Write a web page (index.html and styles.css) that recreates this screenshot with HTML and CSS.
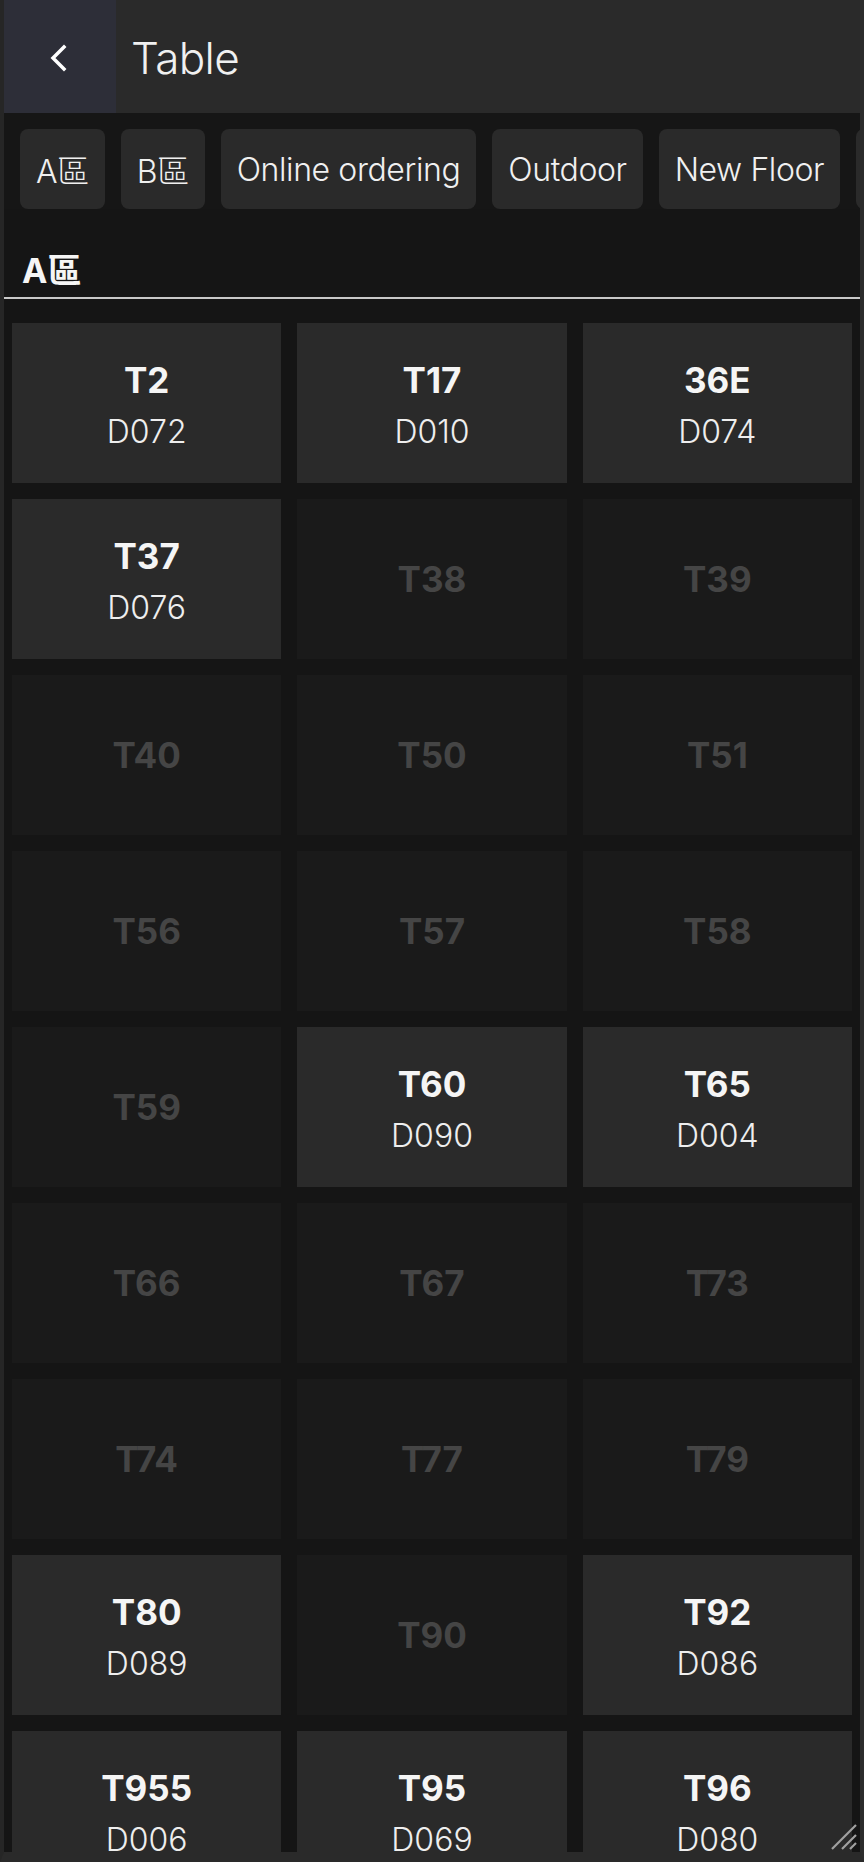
FILE: index.html
```html
<!DOCTYPE html>
<html>
<head>
<meta charset="utf-8">
<link rel="stylesheet" href="styles.css">
</head>
<body>
<div class="app">
  <header class="header">
    <div class="back">
      <svg width="24" height="30" viewBox="0 0 24 30"><path d="M17 4 L6 15 L17 26" fill="none" stroke="#ffffff" stroke-width="3.5" stroke-linecap="square"/></svg>
    </div>
    <div class="title">Table</div>
  </header>
  <nav class="tabs">
    <div class="tab">A區</div>
    <div class="tab">B區</div>
    <div class="tab">Online ordering</div>
    <div class="tab">Outdoor</div>
    <div class="tab">New Floor</div>
    <div class="tab">More</div>
  </nav>
  <div class="section">A區</div>
  <div class="grid-wrap">
    <div class="grid">
      <div class="card on"><div class="name">T2</div><div class="code">D072</div></div>
      <div class="card on"><div class="name">T17</div><div class="code">D010</div></div>
      <div class="card on"><div class="name">36E</div><div class="code">D074</div></div>
      <div class="card on"><div class="name">T37</div><div class="code">D076</div></div>
      <div class="card"><div class="name">T38</div></div>
      <div class="card"><div class="name">T39</div></div>
      <div class="card"><div class="name">T40</div></div>
      <div class="card"><div class="name">T50</div></div>
      <div class="card"><div class="name">T51</div></div>
      <div class="card"><div class="name">T56</div></div>
      <div class="card"><div class="name">T57</div></div>
      <div class="card"><div class="name">T58</div></div>
      <div class="card"><div class="name">T59</div></div>
      <div class="card on"><div class="name">T60</div><div class="code">D090</div></div>
      <div class="card on"><div class="name">T65</div><div class="code">D004</div></div>
      <div class="card"><div class="name">T66</div></div>
      <div class="card"><div class="name">T67</div></div>
      <div class="card"><div class="name">T73</div></div>
      <div class="card"><div class="name">T74</div></div>
      <div class="card"><div class="name">T77</div></div>
      <div class="card"><div class="name">T79</div></div>
      <div class="card on"><div class="name">T80</div><div class="code">D089</div></div>
      <div class="card"><div class="name">T90</div></div>
      <div class="card on"><div class="name">T92</div><div class="code">D086</div></div>
      <div class="card on"><div class="name">T955</div><div class="code">D006</div></div>
      <div class="card on"><div class="name">T95</div><div class="code">D069</div></div>
      <div class="card on"><div class="name">T96</div><div class="code">D080</div></div>
    </div>
    <svg class="grip" width="28" height="28" viewBox="0 0 28 28">
      <path d="M2 26 L26 2 M12 26 L26 12 M20 26 L26 20" stroke="#a0a0a0" stroke-width="2.2" fill="none"/>
    </svg>
  </div>
</div>
</body>
</html>
```

FILE: styles.css
```css
html, body {
  margin: 0;
  padding: 0;
  background: #2a2a2a;
}
body {
  font-family: Inter, "Noto Sans CJK TC", sans-serif;
  color: #f2f2f2;
}
.app {
  width: 864px;
  height: 1862px;
  box-sizing: border-box;
  border-left: 4px solid #262626;
  border-right: 4px solid #2c2c2c;
  border-bottom: 10px solid #2a2a2a;
  display: flex;
  flex-direction: column;
  overflow: hidden;
  background: #151515;
}
.header {
  height: 113px;
  flex: none;
  display: flex;
  background: #2a2a2a;
}
.back {
  width: 112px;
  background: #2d2e38;
  display: flex;
  align-items: center;
  justify-content: center;
}
.back svg {
  margin-left: -2px;
  margin-top: 2px;
}
.title {
  padding-left: 15px;
  display: flex;
  align-items: center;
  font-size: 44px;
  font-weight: 300;
  letter-spacing: -0.6px;
  color: #f0f0f0;
  padding-top: 2px;
}
.tabs {
  flex: none;
  display: flex;
  gap: 16px;
  padding: 16px 0 0 16px;
  overflow: hidden;
  white-space: nowrap;
  background: #161616;
}
.tab {
  flex: none;
  height: 80px;
  padding: 0 16px;
  border-radius: 8px;
  background: #2a2a2a;
  display: flex;
  align-items: center;
  font-size: 32px;
  font-weight: 300;
  letter-spacing: -0.4px;
  color: #f0f0f0;
}
.section {
  flex: none;
  padding: 40px 0 4px 18px;
  line-height: 44px;
  font-size: 34px;
  font-weight: 700;
  color: #f5f5f5;
  border-bottom: 2px solid #c8c8c8;
  background: #151515;
}
.grid-wrap {
  position: relative;
  flex: 1;
  overflow: hidden;
  background: #151515;
}
.grid {
  display: grid;
  grid-template-columns: repeat(3, 1fr);
  grid-auto-rows: 160px;
  gap: 16px;
  padding: 24px 8px;
}
.card {
  background: #1a1a1a;
  display: flex;
  flex-direction: column;
  align-items: center;
  justify-content: center;
}
.card.on {
  background: #2a2a2a;
}
.name {
  font-size: 35px;
  font-weight: 700;
  line-height: 48px;
  color: #454545;
}
.card.on .name {
  color: #f5f5f5;
  margin-top: 4px;
}
.code {
  font-size: 32px;
  font-weight: 300;
  line-height: 44px;
  margin-top: 6px;
  color: #eeeeee;
}
.grip {
  position: absolute;
  right: 2px;
  bottom: 1px;
}
```
